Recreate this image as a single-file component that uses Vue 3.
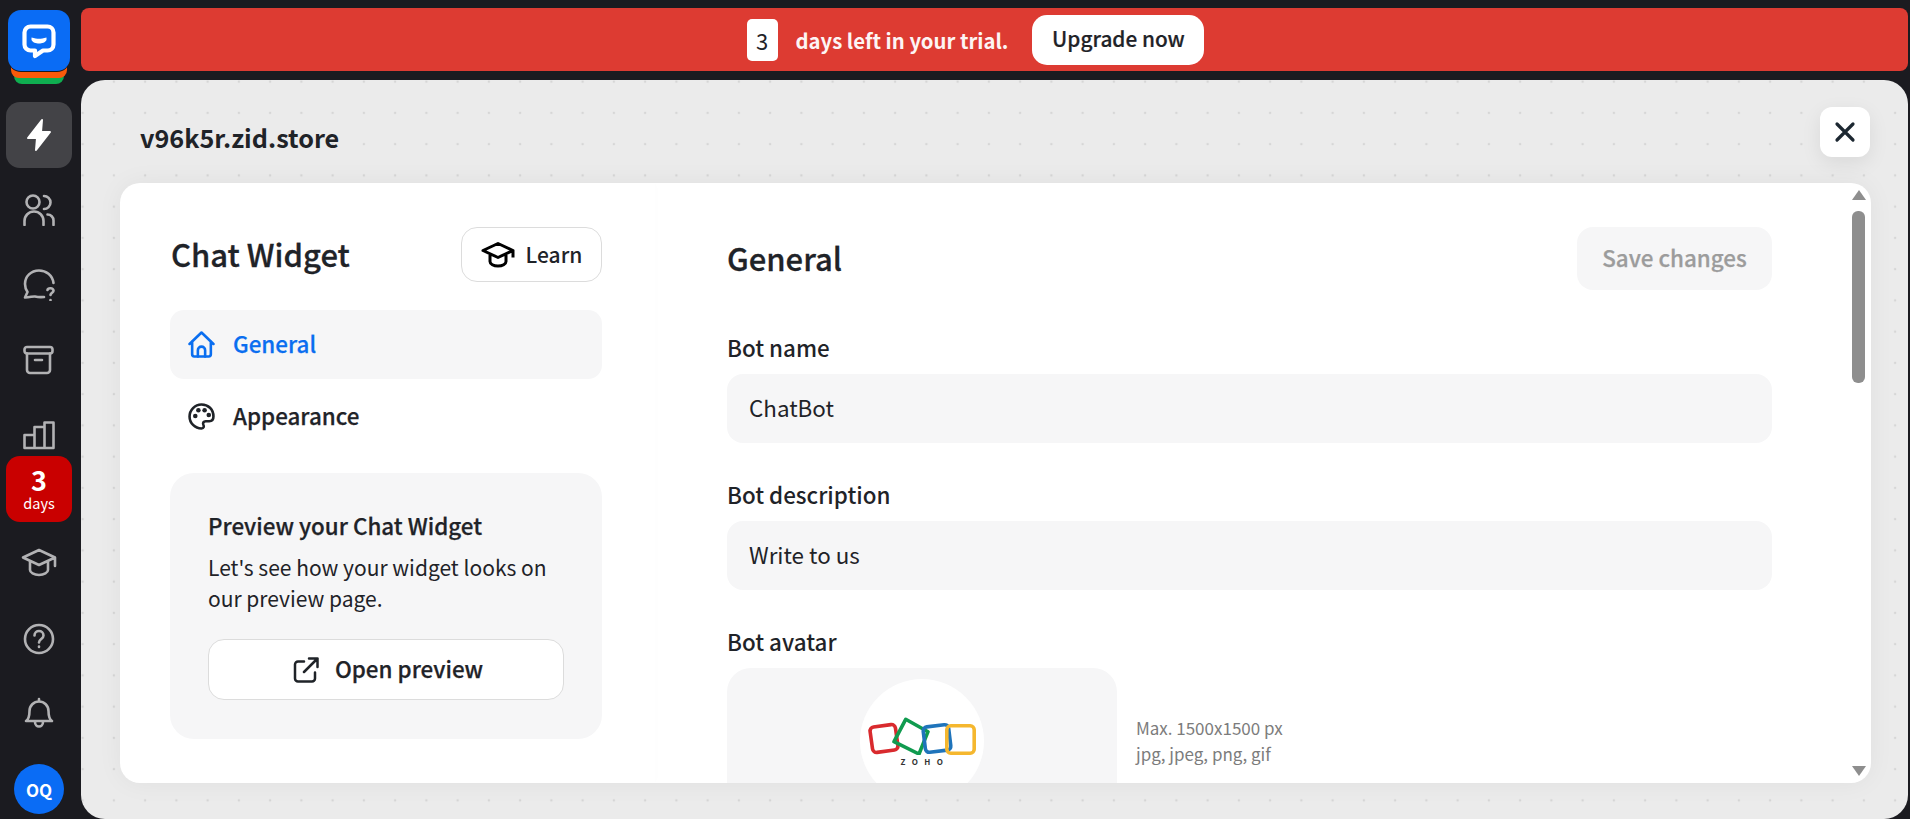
<script setup>
const nav = ['General', 'Appearance']
</script>

<template>
  <div class="app">
    <aside class="sidebar">
      <div class="logo">
        <div class="layer green"></div>
        <div class="layer orange"></div>
        <div class="logo-face">
          <svg width="36" height="36" viewBox="0 0 36 36" fill="none">
            <path d="M9.500 3.500h17a6 6 0 0 1 6 6v12a6 6 0 0 1-6 6h-4.500L14 33v-5.500H9.500a6 6 0 0 1-6-6v-12a6 6 0 0 1 6-6z" stroke="#fff" stroke-width="4.200" stroke-linejoin="round"/>
            <path d="M10.500 14.500c3 .9 5.500 1.300 7.500 1.300s4.500-.4 7.500-1.300v2.500c-1 2.500-4.500 3.500-7.500 3.500s-6.500-1-7.500-3.500z" fill="#fff"/>
          </svg>
        </div>
      </div>
      <div class="tile active">
        <svg width="32" height="36" viewBox="0 0 32 36" fill="#fff" stroke="#fff" stroke-width="2" stroke-linejoin="round">
          <path d="M19 3 5 21h9l-1 12 14-18h-9z"/>
        </svg>
      </div>
      <div class="item item-users">
        <svg class="icon" viewBox="0 0 32 32">
          <circle cx="10" cy="8" r="6.500"/>
          <path d="M21 2a6.500 6.500 0 0 1 0 13M1.500 31v-4a9.500 9.500 0 0 1 19 0v4M24.500 20.500a6 6 0 0 1 6 6V31"/>
        </svg>
      </div>
      <div class="item item-chat">
        <svg class="icon" viewBox="0 0 32 32">
          <path d="M30.500 14C29.500 6 23 1.500 16 1.500 8 1.500 2 7.500 2 15c0 3 .8 5.500 2.500 8L2 28.500c5 0 8-1.500 10-1 3 .7 6 .7 9 .5"/>
          <path d="M24.500 21c.5-2.500 5.500-2.500 6 .5.3 2-2.700 2.500-3 4.500M27.500 31v.5"/>
        </svg>
      </div>
      <div class="item item-archive">
        <svg class="icon" viewBox="0 0 32 32">
          <rect x="1.500" y="3" width="28" height="6.500" rx="2.500"/>
          <path d="M4 9.500V26a3 3 0 0 0 3 3h17a3 3 0 0 0 3-3V9.500M12 16h7"/>
        </svg>
      </div>
      <div class="item item-bars">
        <svg class="icon" viewBox="0 0 32 32">
          <path d="M1.500 30V17h10v13zM11.500 30V9h10v21zM21.500 30V4.500h9V30z"/>
        </svg>
      </div>
      <div class="tile trial">
        <span class="trial-num">3</span>
        <span class="trial-txt">days</span>
      </div>
      <div class="item item-cap">
        <svg class="icon" viewBox="0 0 36 32">
          <path d="M18 3 2 10.500l16 7.500 16-7.500zM9 14.500V23c0 2.500 4 5 9 5s9-2.500 9-5v-8.500M34 10.500V19"/>
        </svg>
      </div>
      <div class="item item-help">
        <svg class="icon" viewBox="0 0 32 32">
          <circle cx="16" cy="16" r="14"/>
          <path d="M11.500 12.500c0-6 9-6 9 0 0 3.500-4.500 3.500-4.500 7M16 23.500v.5"/>
        </svg>
      </div>
      <div class="item item-bell">
        <svg class="icon" viewBox="0 0 32 32">
          <path d="M3 24c3-2 3.500-5 3.500-10a9.500 9.500 0 0 1 19 0c0 5 .5 8 3.500 10zM16 2v2.500M12 25c0 6 8 6 8 0"/>
        </svg>
      </div>
      <div class="avatar">OQ</div>
    </aside>

    <main class="main">
      <div class="banner">
        <span class="badge">3</span>
        <span class="banner-text">days left in your trial.</span>
        <button class="upgrade"><span class="lift">Upgrade now</span></button>
      </div>

      <section class="panel">
        <header class="panel-head">
          <h1 class="store">v96k5r.zid.store</h1>
          <button class="close">
            <svg width="22" height="22" viewBox="0 0 22 22" fill="none" stroke="#1c2731" stroke-width="3.200" stroke-linecap="round">
              <path d="M3 3l16 16M19 3 3 19"/>
            </svg>
          </button>
        </header>

        <div class="card">
          <div class="left">
            <div class="left-head">
              <h2 class="widget-title">Chat Widget</h2>
              <button class="learn">
                <svg width="36" height="27" viewBox="0 0 36 26" fill="none" stroke="#000" stroke-width="3" stroke-linejoin="round">
                  <path d="M17 2 2 9l15 7 15-7zM9 12.500V20c0 2.500 3.500 4.500 8 4.500s8-2 8-4.500v-7.500M32 9v7"/>
                </svg>
                <span class="lift learn-text">Learn</span>
              </button>
            </div>

            <nav class="nav">
              <div class="nav-item selected">
                <svg class="nav-icon" viewBox="0 0 26 26" fill="none" stroke="#0a6ef0" stroke-width="2.500" stroke-linejoin="round" stroke-linecap="round">
                  <path d="M1.500 12.500 13 1.500l11.500 11M4 10v12.500a2 2 0 0 0 2 2h14a2 2 0 0 0 2-2V10"/>
                  <path d="M9.500 24.500v-6a3.500 3.500 0 0 1 7 0v6"/>
                </svg>
                <span class="lift">{{ nav[0] }}</span>
              </div>
              <div class="nav-item">
                <svg class="nav-icon" viewBox="0 0 26 26" fill="none" stroke="#1f2328" stroke-width="2.500" stroke-linejoin="round">
                  <path d="M13 1.500a11.500 11.500 0 1 0 0 23c2.500 0 2.500-2 1.800-3.500-.8-2 .2-3.500 2.200-3.500h3.500c2.500 0 4-1.500 4-4.500C24.500 6 19.500 1.500 13 1.500z"/>
                  <circle cx="7" cy="12.500" r="2.200" fill="#1f2328" stroke="none"/>
                  <circle cx="10" cy="7" r="2.200" fill="#1f2328" stroke="none"/>
                  <circle cx="16" cy="7" r="2.200" fill="#1f2328" stroke="none"/>
                  <circle cx="20" cy="11.500" r="2.200" fill="#1f2328" stroke="none"/>
                </svg>
                <span class="lift">{{ nav[1] }}</span>
              </div>
            </nav>

            <div class="preview">
              <h3 class="preview-title">Preview your Chat Widget</h3>
              <p class="preview-text">Let's see how your widget looks on our preview page.</p>
              <button class="open">
                <svg width="26" height="26" viewBox="0 0 26 26" fill="none" stroke="#1f2328" stroke-width="2.500" stroke-linecap="round" stroke-linejoin="round">
                  <path d="M11 4.500H5A3 3 0 0 0 2 7.500v14a3 3 0 0 0 3 3h14a3 3 0 0 0 3-3v-6M16 1.500h8.500V10M24.500 1.500 11 15"/>
                </svg>
                <span class="lift">Open preview</span>
              </button>
            </div>
          </div>

          <div class="right">
            <div class="right-head">
              <h2 class="general">General</h2>
              <button class="save"><span class="lift">Save changes</span></button>
            </div>
            <label class="label">Bot name</label>
            <div class="input">ChatBot</div>
            <label class="label">Bot description</label>
            <div class="input">Write to us</div>
            <label class="label">Bot avatar</label>
            <div class="avatar-row">
              <div class="avatar-box">
                <div class="circle">
                  <svg class="zoho" width="116" height="40" viewBox="0 0 116 40" fill="none" stroke-width="3.600" stroke-linejoin="round">
                    <rect x="7.200" y="10.700" width="25.600" height="25.600" rx="4" stroke="#d92a2e" transform="rotate(-8 20 23.500)"/>
                    <path d="M41.700 4.300 64 16.700 55 39 30 26.700z" stroke="#109b4f"/>
                    <rect x="60.200" y="10.700" width="25.600" height="25.600" rx="4" stroke="#1f74bb" transform="rotate(-7 73 23.500)"/>
                    <rect x="82.800" y="10.800" width="27.400" height="27.400" rx="4" stroke="#f5b72e"/>
                  </svg>
                  <span class="zoho-text">ZOHO</span>
                </div>
              </div>
              <div class="hint">Max. 1500x1500 px<br />jpg, jpeg, png, gif</div>
            </div>
          </div>

          <div class="scrollbar">
            <span class="arrow up"></span>
            <span class="thumb"></span>
            <span class="grow"></span>
            <span class="arrow down"></span>
          </div>
        </div>
      </section>
    </main>
  </div>
</template>

<style>
html, body { margin: 0; background: #1b1b20; overflow: hidden; }
</style>

<style scoped>
* { box-sizing: border-box; }
.app {
  display: flex;
  width: 1910px;
  height: 819px;
  background: #1b1b20;
  font-family: "Noto Sans CJK SC", "Noto Sans", sans-serif;
  color: #1f2328;
  overflow: hidden;
}
button { font-family: inherit; cursor: pointer; }
h1, h2, h3, p { margin: 0; }
.lift { display: block; margin-bottom: 3px; }

.sidebar {
  width: 81px;
  flex: none;
  display: flex;
  flex-direction: column;
  align-items: center;
  padding-top: 10px;
  padding-right: 3px;
}
.logo { position: relative; width: 62px; height: 76px; margin-bottom: 16px; flex: none; }
.logo-face {
  position: absolute; top: 0; left: 0; width: 62px; height: 61px;
  background: #0a6cf5; border-radius: 13px;
  box-shadow: 0 1px 0 #1b1b20;
  display: flex; align-items: center; justify-content: center;
  padding-top: 1px;
}
.layer { position: absolute; }
.orange { left: 3px; right: 3px; top: 50px; height: 18px; background: #fa5a0a; border-radius: 0 0 8px 8px; z-index: 1; }
.green { left: 6px; right: 6px; top: 56px; height: 18px; background: #0fae50; border-radius: 0 0 8px 8px; }
.logo-face { z-index: 2; }
.tile {
  width: 66px; height: 66px; border-radius: 14px; flex: none;
  display: flex; flex-direction: column; align-items: center; justify-content: center;
  color: #fff;
}
.active { background: #434347; }
.item { width: 66px; height: 40px; display: flex; align-items: center; justify-content: center; flex: none; }
.item-users { margin-top: 22px; }
.item-chat { margin-top: 35px; }
.item-archive { margin-top: 35px; }
.item-bars { margin-top: 34px; }
.item-cap { margin-top: 21px; }
.item-help { margin-top: 36px; }
.item-bell { margin-top: 34px; }
.icon { width: 32px; height: 32px; fill: none; stroke: #b2b2b4; stroke-width: 2.600; stroke-linecap: round; stroke-linejoin: round; }
.item-cap .icon { width: 36px; }
.trial { background: #c90000; margin-top: 2px; }
.trial-num { font-size: 27px; font-weight: 700; line-height: 28px; }
.trial-txt { font-size: 14.500px; line-height: 18px; }
.avatar {
  margin-top: 31px;
  width: 50px; height: 50px; border-radius: 50%;
  background: #0a6cf5; color: #fff;
  font-size: 17px; font-weight: 700;
  display: flex; align-items: center; justify-content: center; flex: none;
}

.main { flex: 1; display: flex; flex-direction: column; padding: 8px 2px 0 0; min-width: 0; }
.banner {
  height: 63px; flex: none;
  background: #dd3b32; border-radius: 8px;
  display: flex; align-items: center; justify-content: center;
  padding-right: 38px;
}
.badge {
  width: 31px; height: 42px; border-radius: 5px; background: #fff;
  display: flex; align-items: center; justify-content: center;
  font-size: 22px; line-height: 1;
}
.banner-text { margin-left: 18px; color: #fff; font-size: 20.300px; font-weight: 700; line-height: 30px; opacity: .95; }
.upgrade {
  margin-left: 24px; width: 172px; height: 50px; border-radius: 15px; border: 0; background: #fff;
  color: #1f2328; font-size: 20.800px; font-weight: 500; line-height: 1; -webkit-text-stroke: .2px currentColor;
}

.panel {
  margin-top: 9px; flex: 1; min-height: 0;
  background-color: #ebebeb;
  background-image: radial-gradient(circle, #d6d6d6 1px, transparent 1.600px);
  background-size: 31.250px 31.250px;
  background-position: -14px -14px;
  padding: 0 37px 36px 39px;
  display: flex; flex-direction: column;
  border-radius: 24px;
}
.panel-head { height: 103px; flex: none; display: flex; align-items: flex-start; justify-content: space-between; padding: 27px 1px 0 20px; }
.store { font-size: 25.200px; font-weight: 700; line-height: 60px; color: #1f2328; }
.close {
  width: 50px; height: 50px; border-radius: 12px; border: 0; background: #fff;
  display: flex; align-items: center; justify-content: center; padding: 0;
  box-shadow: 0 6px 20px rgba(0,0,0,.08);
}

.card {
  flex: 1; min-height: 0; display: flex;
  background: #fff; border-radius: 20px; overflow: hidden;
  box-shadow: 0 0 26px rgba(0,0,0,.05);
}
.left {
  width: 535px; flex: none; padding: 44px 53px 0 50px;
  box-shadow: 1px 0 8px rgba(0,0,0,.012);
}
.left-head { display: flex; align-items: center; justify-content: space-between; height: 55px; padding-left: 1px; }
.widget-title { font-size: 31px; font-weight: 500; line-height: 55px; padding-bottom: 2px; -webkit-text-stroke: .3px currentColor; }
.learn {
  width: 141px; height: 55px; border: 1px solid #dcdcdc; border-radius: 16px; background: #fff;
  display: flex; align-items: center; justify-content: center; gap: 9px;
  font-size: 21px; font-weight: 500; color: #1f2328; padding: 0;
}
.learn-text { margin-bottom: 1px; }
.nav { margin-top: 28px; }
.nav-item {
  height: 69px; border-radius: 14px; display: flex; align-items: center;
  padding-left: 18px; gap: 18px;
  font-size: 22.400px; font-weight: 500; -webkit-text-stroke: .25px currentColor;
}
.nav-item + .nav-item { margin-top: 3px; }
.selected { background: #f6f6f7; color: #0a6ef0; }
.nav-icon { width: 27px; height: 27px; flex: none; }
.preview {
  margin-top: 22px; height: 266px; border-radius: 24px; background: #f6f6f7;
  padding: 36px 38px 0;
}
.preview-title { font-size: 22.400px; font-weight: 500; line-height: 32px; -webkit-text-stroke: .25px currentColor; }
.preview-text { font-size: 21px; line-height: 30.500px; margin-top: 11px; }
.open {
  margin-top: 26px; width: 100%; height: 61px; border: 1px solid #dcdcdc; border-radius: 16px; background: #fff;
  display: flex; align-items: center; justify-content: center; gap: 16px;
  font-size: 22.400px; font-weight: 500; color: #1f2328; padding: 0 0 0 4px; -webkit-text-stroke: .25px currentColor;
}

.right { flex: 1; min-width: 0; padding: 44px 79px 0 72px; overflow: hidden; }
.right-head { display: flex; align-items: center; justify-content: space-between; height: 63px; margin-bottom: 41px; }
.general { font-size: 31px; font-weight: 500; line-height: 61px; padding-bottom: 2px; -webkit-text-stroke: .3px currentColor; }
.save {
  width: 195px; height: 63px; border: 0; border-radius: 16px; background: #f6f6f7;
  font-size: 22.400px; font-weight: 500; color: #9c9c9c; -webkit-text-stroke: .25px currentColor;
}
.label { display: block; font-size: 22.400px; font-weight: 500; line-height: 32px; margin-bottom: 11px; }
.input {
  height: 69px; border-radius: 16px; background: #f6f6f7; display: flex; align-items: center;
  padding: 0 0 3px 22px; font-size: 22.400px; margin-bottom: 35px;
}
.avatar-row { display: flex; align-items: center; gap: 19px; margin-top: 0; }
.avatar-box {
  width: 390px; height: 155px; flex: none; border-radius: 24px; background: #f6f6f7;
  display: flex; justify-content: center; padding-top: 11px;
}
.circle {
  width: 124px; height: 124px; border-radius: 50%; background: #fff;
  display: flex; flex-direction: column; align-items: center; padding-top: 36px; flex: none;
}
.zoho { flex: none; display: block; }
.zoho-text { font-size: 8px; font-weight: 700; line-height: 10px; letter-spacing: 6.500px; margin-top: 2px; margin-left: 6px; color: #333; }
.hint { font-size: 17px; line-height: 26px; color: #7c7c7c; margin-top: -9px; }

.scrollbar { width: 20px; flex: none; display: flex; flex-direction: column; align-items: center; padding: 7px 5px 7px 0; }
.arrow { width: 0; height: 0; border-left: 7px solid transparent; border-right: 7px solid transparent; flex: none; }
.up { border-bottom: 10px solid #8e8e8e; }
.down { border-top: 10px solid #8e8e8e; }
.thumb { width: 13px; height: 172px; border-radius: 6px; background: #8e8e8e; margin-top: 11px; flex: none; }
.grow { flex: 1; }
</style>
